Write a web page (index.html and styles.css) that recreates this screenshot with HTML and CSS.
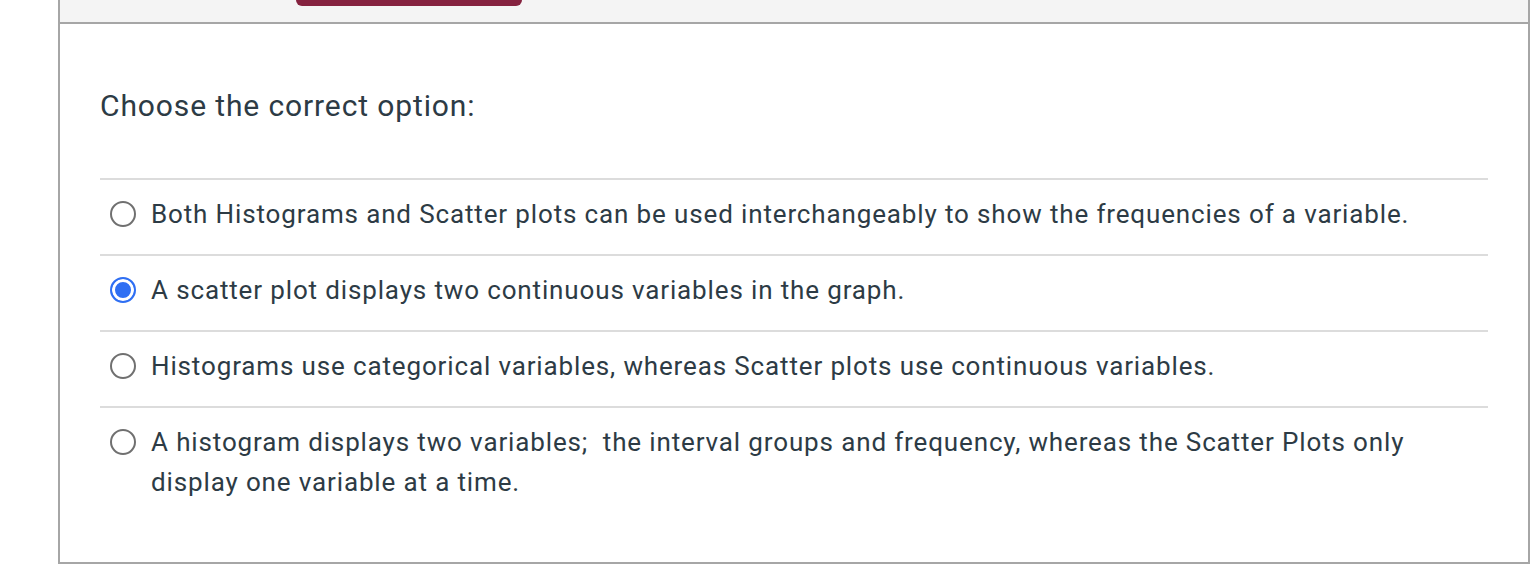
FILE: index.html
```html
<!DOCTYPE html>
<html>
<head>
<meta charset="utf-8">
<link rel="stylesheet" href="styles.css">
</head>
<body>
<div class="panel">
  <div class="panel-header">
    <div class="submit-tab"></div>
  </div>
  <div class="panel-body">
    <h2 class="question">Choose the correct option:</h2>
    <ul class="options">
      <li class="option">
        <span class="radio"></span>
        <span class="label">Both Histograms and Scatter plots can be used interchangeably to show the frequencies of a variable.</span>
      </li>
      <li class="option">
        <span class="radio checked"></span>
        <span class="label">A scatter plot displays two continuous variables in the graph.</span>
      </li>
      <li class="option">
        <span class="radio"></span>
        <span class="label">Histograms use categorical variables, whereas Scatter plots use continuous variables.</span>
      </li>
      <li class="option">
        <span class="radio"></span>
        <span class="label">A histogram displays two variables;&nbsp; the interval groups and frequency, whereas the Scatter Plots only display one variable at a time.</span>
      </li>
    </ul>
  </div>
</div>
</body>
</html>
```
FILE: styles.css
```css
* { box-sizing: border-box; }
html, body {
  margin: 0;
  padding: 0;
  background: #ffffff;
}
body {
  font-family: Roboto, "Liberation Sans", Arial, sans-serif;
  color: #2d3b45;
}
.panel {
  margin-left: 58px;
  width: 1472px;
  height: 564px;
  border-left: 2px solid #a6a6a6;
  border-right: 2px solid #a6a6a6;
  border-bottom: 2px solid #a6a6a6;
  display: flex;
  flex-direction: column;
}
.panel-header {
  height: 24px;
  flex: none;
  background: #f4f4f4;
  border-bottom: 2px solid #a6a6a6;
  display: flex;
  align-items: flex-start;
  padding-left: 236px;
}
.submit-tab {
  width: 226px;
  height: 6px;
  background: #85223f;
  border-radius: 0 0 6px 6px;
}
.panel-body {
  padding: 0 40px 0 40px;
}
.question {
  margin: 0;
  padding-top: 62px;
  font-size: 30px;
  font-weight: 400;
  line-height: 40px;
  letter-spacing: 0.88px;
  height: 154px;
}
.options {
  list-style: none;
  margin: 0;
  padding: 0;
}
.option {
  border-top: 2px solid #dcdcdc;
  display: flex;
  align-items: flex-start;
  padding: 14px 0 20px 10px;
  font-size: 26px;
  line-height: 40px;
  letter-spacing: 0.86px;
}
.radio {
  flex: none;
  width: 26px;
  height: 26px;
  margin-top: 7px;
  margin-right: 15px;
  border: 2px solid #707070;
  border-radius: 50%;
  background: #fff;
}
.radio.checked {
  border: 2.5px solid #2f6ff3;
  box-shadow: inset 0 0 0 3px #fff;
  background: #2f6ff3;
}
.label {
  flex: 1;
}
```
